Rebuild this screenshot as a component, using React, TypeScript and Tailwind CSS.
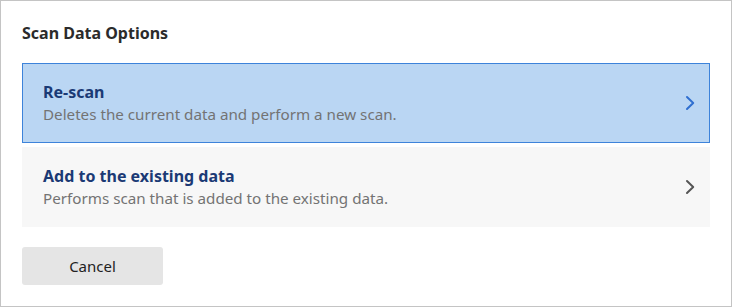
const Chevron = ({ className }: { className: string }) => (
  <svg width="10" height="16" viewBox="0 0 10 16" fill="none" className={className}>
    <path d="M2 2l6.2 6-6.2 6" stroke="currentColor" strokeWidth="2" strokeLinecap="round" strokeLinejoin="round" />
  </svg>
);

const options = [
  {
    title: "Re-scan",
    desc: "Deletes the current data and perform a new scan.",
    active: true,
  },
  {
    title: "Add to the existing data",
    desc: "Performs scan that is added to the existing data.",
    active: false,
  },
];

export default function App() {
  return (
    <div className="h-[307px] w-[732px] border border-[#c4c4c4] bg-white px-[21px] pt-[22px] font-['Noto_Sans',sans-serif]">
      <h2 className="text-[16px] font-bold leading-5 text-[#2b2b2b]">Scan Data Options</h2>
      <div className="mt-5 flex flex-col gap-1">
        {options.map((o) => (
          <button
            key={o.title}
            className={`flex h-20 w-full items-center justify-between border pl-5 pr-[14px] text-left ${
              o.active ? "border-[#3d83da] bg-[#bad6f3]" : "border-transparent bg-[#f7f7f7]"
            }`}
          >
            <div>
              <div className="text-[16px] font-bold leading-[22px] text-[#1b3a75]">{o.title}</div>
              <div className="text-[15.2px] leading-[22px] text-[#737373]">{o.desc}</div>
            </div>
            <Chevron className={o.active ? "text-[#2f6fd0]" : "text-[#555555]"} />
          </button>
        ))}
      </div>
      <button className="mt-5 h-[38px] w-[141px] rounded-[3px] bg-[#e5e5e5] text-[15px] text-[#222222]">
        Cancel
      </button>
    </div>
  );
}
